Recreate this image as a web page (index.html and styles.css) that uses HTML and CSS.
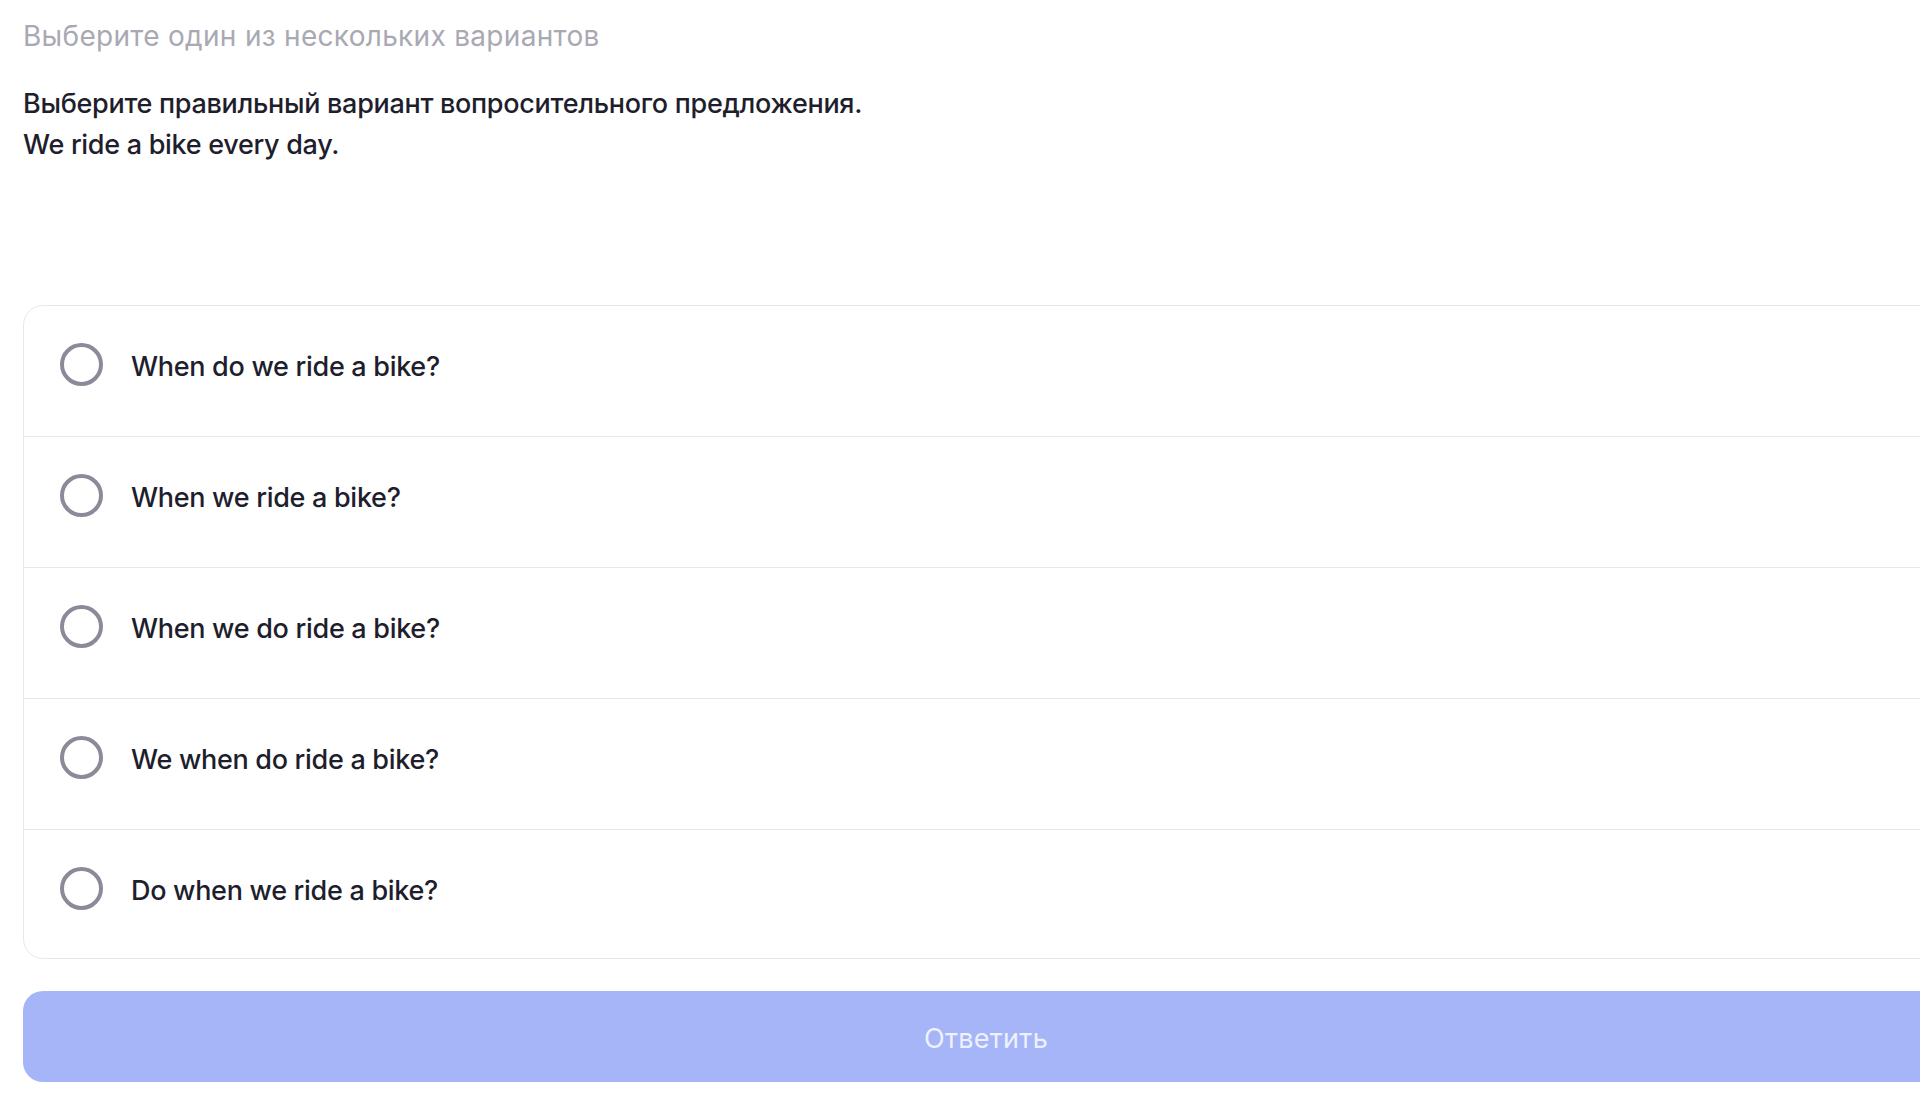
FILE: index.html
```html
<!DOCTYPE html>
<html lang="ru">
<head>
    <meta charset="UTF-8">
    <meta name="viewport" content="width=device-width, initial-scale=1.0">
    <title>Задание</title>
    <link rel="stylesheet" href="styles.css">
</head>
<body>
    <div class="task">
        <div class="task-hint">Выберите один из нескольких вариантов</div>
        <div class="task-question">
            <p>Выберите правильный вариант вопросительного предложения.</p>
            <p>We ride a bike every day.</p>
        </div>
        <div class="options">
            <label class="option"><span class="radio"></span><span class="option-text">When do we ride a bike?</span></label>
            <label class="option"><span class="radio"></span><span class="option-text">When we ride a bike?</span></label>
            <label class="option"><span class="radio"></span><span class="option-text">When we do ride a bike?</span></label>
            <label class="option"><span class="radio"></span><span class="option-text">We when do ride a bike?</span></label>
            <label class="option"><span class="radio"></span><span class="option-text">Do when we ride a bike?</span></label>
        </div>
        <button class="answer-btn" disabled>Ответить</button>
    </div>
</body>
</html>
```

FILE: styles.css
```css
* { margin: 0; padding: 0; box-sizing: border-box; }
html, body { overflow: hidden; }
body { font-family: Inter, 'Noto Sans', sans-serif; background: #fff; color: #1e1e2c; }
.task { width: 1949px; padding: 21px 0 0 23px; }
.task-hint { font-size: 28px; letter-spacing: 0.3px; color: #a9a9b3; line-height: 30px; }
.task-question { margin-top: 32px; font-size: 27px; letter-spacing: -0.3px; font-weight: 500; line-height: 41px; }
.options { margin-top: 140px; border: 1px solid #e8e8eb; border-radius: 20px; overflow: hidden; }
.option { display: flex; align-items: flex-start; gap: 28px; height: 131px; padding: 37px 36px 0; border-bottom: 1px solid #e8e8eb; cursor: pointer; }
.option:last-child { height: 128px; border-bottom: none; }
.radio { width: 43px; height: 43px; border: 4px solid #8b8a99; border-radius: 50%; flex-shrink: 0; }
.option-text { font-size: 27px; letter-spacing: -0.3px; font-weight: 500; line-height: 48px; }
.answer-btn { display: block; width: 100%; height: 91px; margin-top: 32px; padding-top: 3px; border: none; border-radius: 20px; background: #a6b5f8; color: #eef1fe; font-family: inherit; font-size: 27px; letter-spacing: 0.3px; }
```
